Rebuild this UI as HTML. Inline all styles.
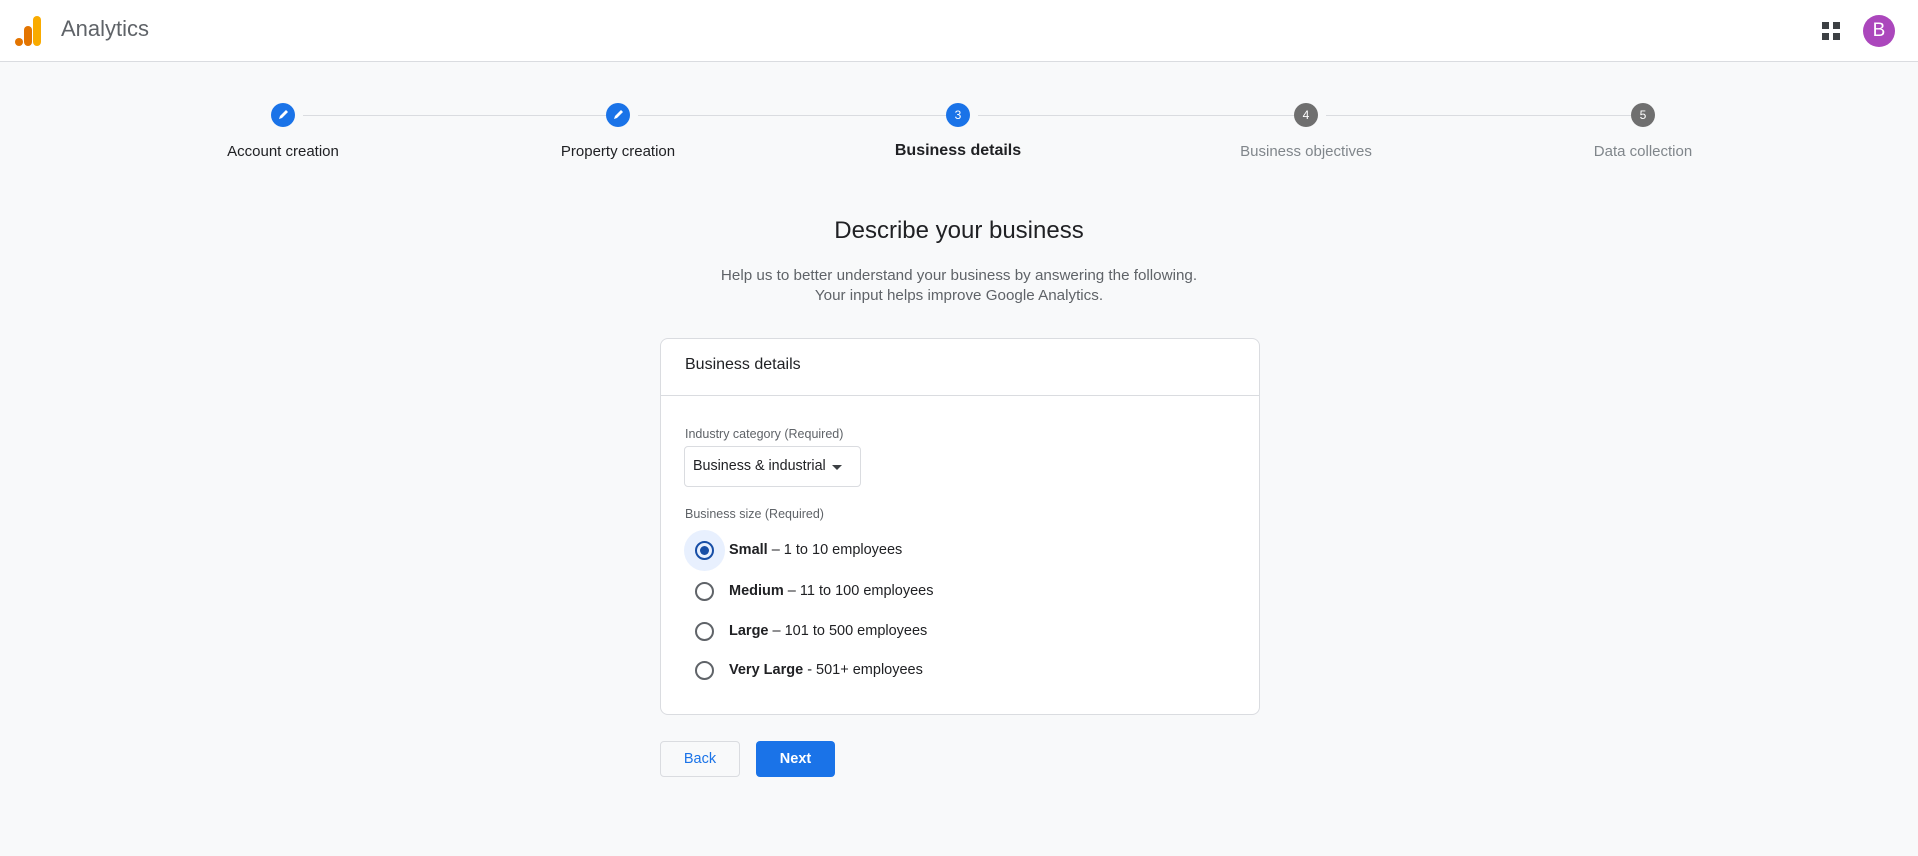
<!DOCTYPE html>
<html><head><meta charset="utf-8"><style>
*{margin:0;padding:0;box-sizing:border-box}
body{width:1918px;height:856px;background:#f8f9fa;font-family:"Liberation Sans",Arial,sans-serif;position:relative;overflow:hidden;color:#202124}
.a{position:absolute}
.hdr{left:0;top:0;width:1918px;height:62px;background:#fff;border-bottom:1px solid #dadce0}
.c{width:24px;height:24px;border-radius:50%;color:#fff;font-size:12px;text-align:center;line-height:24px}
.ln{height:1px;background:#dadce0;top:115px}
.lbl{top:143px;font-size:15px;white-space:nowrap;transform:translateX(-50%)}
.radio{width:19px;height:19px;border-radius:50%;border:2px solid #5f6368}
.rt{font-size:14.5px;left:729px;white-space:nowrap}
</style></head><body>
<div class="a hdr"></div>
<svg class="a" style="left:14px;top:16px" width="28" height="30" viewBox="0 0 28 30">
<rect x="19" y="0" width="8" height="30" rx="4" fill="#f9ab00"/>
<rect x="10" y="10" width="8" height="20" rx="4" fill="#e37400"/>
<circle cx="5" cy="26" r="4" fill="#e37400"/></svg>
<div class="a" style="left:61px;top:16px;font-size:22px;color:#5f6368">Analytics</div>
<svg class="a" style="left:1822px;top:22px" width="18" height="18" viewBox="0 0 18 18" fill="#3c4043">
<rect x="0" y="0" width="7" height="7"/><rect x="11" y="0" width="7" height="7"/><rect x="0" y="11" width="7" height="7"/><rect x="11" y="11" width="7" height="7"/></svg>
<div class="a" style="left:1863px;top:15px;width:32px;height:32px;border-radius:50%;background:#ab47bc;color:#fff;font-size:19px;text-align:center;line-height:32px">B</div>

<div class="a ln" style="left:303px;width:303px"></div>
<div class="a ln" style="left:638px;width:308px"></div>
<div class="a ln" style="left:978px;width:316px"></div>
<div class="a ln" style="left:1326px;width:305px"></div>

<div class="a c" style="left:271px;top:103px;background:#1a73e8"><svg width="24" height="24" viewBox="0 0 24 24"><path d="M8 16l1-3 6-6 2 2-6 6z" fill="#fff"/></svg></div>
<div class="a c" style="left:606px;top:103px;background:#1a73e8"><svg width="24" height="24" viewBox="0 0 24 24"><path d="M8 16l1-3 6-6 2 2-6 6z" fill="#fff"/></svg></div>
<div class="a c" style="left:946px;top:103px;background:#1a73e8">3</div>
<div class="a c" style="left:1294px;top:103px;background:#6f6f6f">4</div>
<div class="a c" style="left:1631px;top:103px;background:#6f6f6f">5</div>

<div class="a lbl" style="left:283px">Account creation</div>
<div class="a lbl" style="left:618px">Property creation</div>
<div class="a lbl" style="left:958px;top:142px;font-size:16px;font-weight:bold;color:#202124">Business details</div>
<div class="a lbl" style="left:1306px;color:#80868b">Business objectives</div>
<div class="a lbl" style="left:1643px;color:#80868b">Data collection</div>

<div class="a" style="left:0;width:1918px;top:217px;text-align:center;font-size:24px">Describe your business</div>
<div class="a" style="left:0;width:1918px;top:266px;text-align:center;font-size:15.2px;line-height:20px;color:#5f6368">Help us to better understand your business by answering the following.<br>Your input helps improve Google Analytics.</div>

<div class="a" style="left:660px;top:338px;width:600px;height:377px;background:#fff;border:1px solid #dadce0;border-radius:8px"></div>
<div class="a" style="left:661px;top:395px;width:598px;height:1px;background:#dadce0"></div>
<div class="a" style="left:685px;top:356px;font-size:16px">Business details</div>
<div class="a" style="left:685px;top:427px;font-size:12.5px;color:#5f6368">Industry category (Required)</div>
<div class="a" style="left:684px;top:446px;width:177px;height:41px;border:1px solid #dadce0;border-radius:4px;background:#fff"></div>
<div class="a" style="left:693px;top:458px;font-size:14.3px">Business &amp; industrial</div>
<div class="a" style="left:832px;top:465px;width:0;height:0;border-left:5px solid transparent;border-right:5px solid transparent;border-top:5px solid #3c4043"></div>
<div class="a" style="left:685px;top:507px;font-size:12.5px;color:#5f6368">Business size (Required)</div>

<div class="a" style="left:684px;top:530px;width:41px;height:41px;border-radius:50%;background:#e8f0fe"></div>
<div class="a radio" style="left:695px;top:541px;border-color:#174ea6"><div style="margin:3px;width:9px;height:9px;border-radius:50%;background:#174ea6"></div></div>
<div class="a radio" style="left:695px;top:582px"></div>
<div class="a radio" style="left:695px;top:622px"></div>
<div class="a radio" style="left:695px;top:661px"></div>
<div class="a rt" style="top:542px"><b>Small</b> – 1 to 10 employees</div>
<div class="a rt" style="top:583px"><b>Medium</b> – 11 to 100 employees</div>
<div class="a rt" style="top:623px"><b>Large</b> – 101 to 500 employees</div>
<div class="a rt" style="top:662px"><b>Very Large</b> - 501+ employees</div>

<div class="a" style="left:660px;top:741px;width:80px;height:36px;border:1px solid #dadce0;border-radius:4px;background:#f8f9fa;color:#1a73e8;font-size:14.5px;text-align:center;line-height:34px">Back</div>
<div class="a" style="left:756px;top:741px;width:79px;height:36px;border-radius:4px;background:#1a73e8;color:#fff;font-size:14.5px;font-weight:bold;text-align:center;line-height:36px">Next</div>
</body></html>
